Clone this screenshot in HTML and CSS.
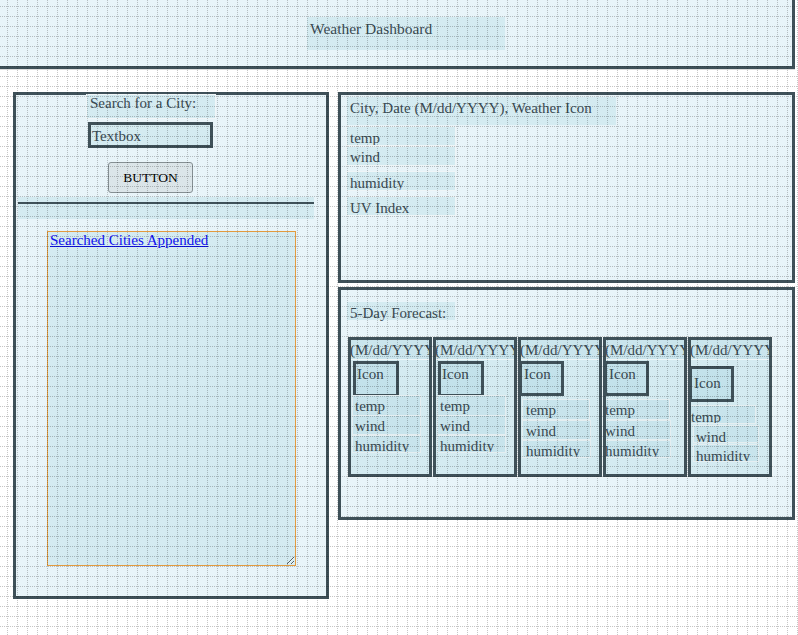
FILE: index.html
```html
<!DOCTYPE html>
<html lang="en">
<head>
<meta charset="utf-8">
<title>Weather Dashboard</title>
<link rel="stylesheet" href="styles.css">
</head>
<body>
<header class="site-header">
  <h1 class="site-title">Weather Dashboard</h1>
</header>
<main class="layout">
  <aside class="search-panel">
    <label class="search-label" for="city">Search for a City:</label>
    <div class="textbox" id="city">Textbox</div>
    <button class="search-btn" type="button">BUTTON</button>
    <div class="divider"><hr class="rule"></div>
    <div class="history"><a href="#" class="history-link">Searched Cities Appended</a></div>
  </aside>
  <section class="right-col">
    <div class="current">
      <div class="current-title">City, Date (M/dd/YYYY), Weather Icon</div>
      <div class="stat stat--first">temp</div>
      <div class="stat">wind</div>
      <div class="stat stat--gap">humidity</div>
      <div class="stat stat--gap">UV Index</div>
    </div>
    <div class="forecast">
      <div class="forecast-title">5-Day Forecast:</div>
      <div class="cards">
        <div class="card">
          <div class="card-date">(M/dd/YYYY)</div>
          <div class="card-icon">Icon</div>
          <div class="card-stat card-stat--temp">temp</div>
          <div class="card-stat card-stat--wind">wind</div>
          <div class="card-stat card-stat--hum">humidity</div>
        </div>
        <div class="card">
          <div class="card-date">(M/dd/YYYY)</div>
          <div class="card-icon">Icon</div>
          <div class="card-stat card-stat--temp">temp</div>
          <div class="card-stat card-stat--wind">wind</div>
          <div class="card-stat card-stat--hum">humidity</div>
        </div>
        <div class="card card--shift">
          <div class="card-date">(M/dd/YYYY)</div>
          <div class="card-icon">Icon</div>
          <div class="card-stat card-stat--temp">temp</div>
          <div class="card-stat card-stat--wind">wind</div>
          <div class="card-stat card-stat--hum">humidity</div>
        </div>
        <div class="card card--shift card--flat">
          <div class="card-date">(M/dd/YYYY)</div>
          <div class="card-icon">Icon</div>
          <div class="card-stat card-stat--temp">temp</div>
          <div class="card-stat card-stat--wind">wind</div>
          <div class="card-stat card-stat--hum">humidity</div>
        </div>
        <div class="card card--drop">
          <div class="card-date">(M/dd/YYYY)</div>
          <div class="card-icon">Icon</div>
          <div class="card-stat card-stat--temp">temp</div>
          <div class="card-stat card-stat--wind">wind</div>
          <div class="card-stat card-stat--hum">humidity</div>
        </div>
      </div>
    </div>
  </section>
</main>
<div class="grid-overlay"></div>
</body>
</html>
```

FILE: styles.css
```css
* { box-sizing: border-box; }

html, body {
  margin: 0;
  padding: 0;
}

body {
  width: 798px;
  height: 635px;
  overflow: hidden;
  background: #ffffff;
  font-family: "Liberation Serif", "Times New Roman", serif;
  font-size: 15px;
  line-height: 17px;
  color: #3a4a52;
}

/* ---------- header ---------- */
.site-header {
  width: 795px;
  height: 69px;
  background: #e8f4f9;
  border-right: 3px solid #3f5159;
  border-bottom: 3px solid #3f5159;
  box-shadow: 0 1px 0 #dcdcdc;
  padding: 17px 0 0 307px;
}

.site-title {
  margin: 0;
  width: 198px;
  height: 33px;
  padding: 3px 0 0 3px;
  background: #d4ebf1;
  font-size: 15.5px;
  font-weight: normal;
  line-height: 17px;
}

/* ---------- layout ---------- */
.layout {
  display: flex;
  align-items: flex-start;
  margin-top: 23px;
  padding-left: 13px;
  gap: 9px;
}

/* ---------- search panel ---------- */
.search-panel {
  width: 316px;
  height: 507px;
  border: 3px solid #3f5159;
  background: #e8f4f9;
  display: flex;
  flex-direction: column;
  align-items: flex-start;
}

.search-label {
  display: block;
  margin-left: 71px;
  width: 128px;
  height: 23px;
  padding: 0 0 0 3px;
  background: #d4ebf1;
  outline: 1px solid #f0f6f8;
}

.textbox {
  margin: 4px 0 0 72px;
  width: 125px;
  height: 26px;
  border: 3px solid #3f5159;
  background: #d4ebf1;
  padding: 1px 0 0 1px;
  line-height: 20px;
}

.search-btn {
  margin: 14px 0 0 92px;
  width: 85px;
  height: 31px;
  border: 1px solid #858f93;
  border-radius: 3px;
  background: #dbe5e9;
  font-family: "Liberation Serif", "Times New Roman", serif;
  font-size: 13.5px;
  color: #000;
  padding: 0;
}

.divider {
  margin: 4px 0 0 2px;
  width: 296px;
  height: 22px;
  background: #d4ebf1;
  padding-top: 5px;
}

.rule {
  margin: 0;
  border: 0;
  height: 2px;
  background: #3f5159;
}

.history {
  margin: 12px 0 0 31px;
  width: 249px;
  height: 335px;
  border: 1px solid #e39b3f;
  background: #d4ebf1;
  padding: 0 2px;
  resize: both;
  overflow: auto;
}

.history-link {
  color: #1010ee;
  text-decoration: underline;
}

/* ---------- right column ---------- */
.right-col {
  width: 457px;
  display: flex;
  flex-direction: column;
  gap: 4px;
}

.current {
  height: 191px;
  border: 3px solid #3f5159;
  background: #e8f4f9;
  padding: 2px 0 0 6px;
}

.current-title {
  width: 269px;
  height: 28px;
  padding: 3px 0 0 3px;
  background: #d4ebf1;
}

.stat {
  width: 108px;
  height: 19px;
  padding: 3px 0 0 3px;
  background: #d4ebf1;
  outline: 1px solid #eef5f7;
}

.stat--first { margin-top: 2px; }
.stat--gap { margin-top: 7px; height: 18px; }

.forecast {
  height: 233px;
  border: 3px solid #3f5159;
  background: #e8f4f9;
  padding: 12px 0 0 6px;
}

.forecast-title {
  width: 108px;
  height: 18px;
  padding: 3px 0 0 3px;
  background: #d4ebf1;
}

.cards {
  display: flex;
  gap: 1px;
  margin: 17px 0 0 1px;
}

.card {
  width: 84px;
  height: 140px;
  border: 3px solid #3f5159;
  background: #d4ebf1;
  overflow: hidden;
  outline: 1px solid #eef5f7;
}

.card-date {
  height: 20px;
  margin-left: -1px;
  line-height: 20px;
  white-space: nowrap;
  background: #cae5ed;
  border-bottom: 1px solid #eef5f7;
}

.card-icon {
  margin: 1px 0 0 2px;
  width: 46px;
  height: 36px;
  border: 3px solid #3f5159;
  background: #c3e2eb;
  padding: 2px 0 0 1px;
}

.card-stat {
  margin-left: 2px;
  width: 67px;
  padding: 2px 0 0 2px;
  background: #c8e4ec;
  outline: 1px solid #e4eef1;
  overflow: hidden;
}

.card-stat--temp { margin-top: -1px; height: 19px; }
.card-stat--wind { margin-top: 1px; height: 18px; }
.card-stat--hum  { margin-top: 2px; height: 16px; }

/* cards 3 & 4: icon pulled left, stats dropped */
.card--shift .card-icon {
  margin-left: -2px;
  width: 45px;
  height: 35px;
  padding-left: 2px;
}

.card--shift .card-stat--temp { margin-top: 4px; width: 66px; }
.card--shift .card-stat--wind { margin-top: 2px; }
.card--shift .card-stat--hum { margin-top: 2px; }

.card--shift:not(.card--flat) .card-stat { margin-left: 2px; padding-left: 3px; }
.card--flat .card-stat { margin-left: -3px; padding-left: 2px; }

/* card 5: everything dropped */
.card--drop .card-icon {
  margin: 6px 0 0 -2px;
  width: 45px;
  padding: 6px 0 0 2px;
}

.card--drop .card-stat--temp { margin: 4px 0 0 -2px; width: 66px; height: 17px; padding-top: 3px; padding-left: 2px; }
.card--drop .card-stat--wind { margin: 3px 0 0 3px; width: 64px; height: 16px; padding-top: 3px; }
.card--drop .card-stat--hum  { margin: 3px 0 0 3px; width: 64px; height: 16px; padding-top: 3px; }

.grid-overlay {
  position: fixed;
  inset: 0;
  pointer-events: none;
  mix-blend-mode: multiply;
  background-image:
    conic-gradient(from 270deg at 1px 1px, #c6c6c6 25%, transparent 0),
    conic-gradient(from 270deg at 1px 1px, #c6c6c6 25%, transparent 0);
  background-size: 10px 2px, 2px 10px;
  background-position: 7px 0, 0 6px;
}
```
